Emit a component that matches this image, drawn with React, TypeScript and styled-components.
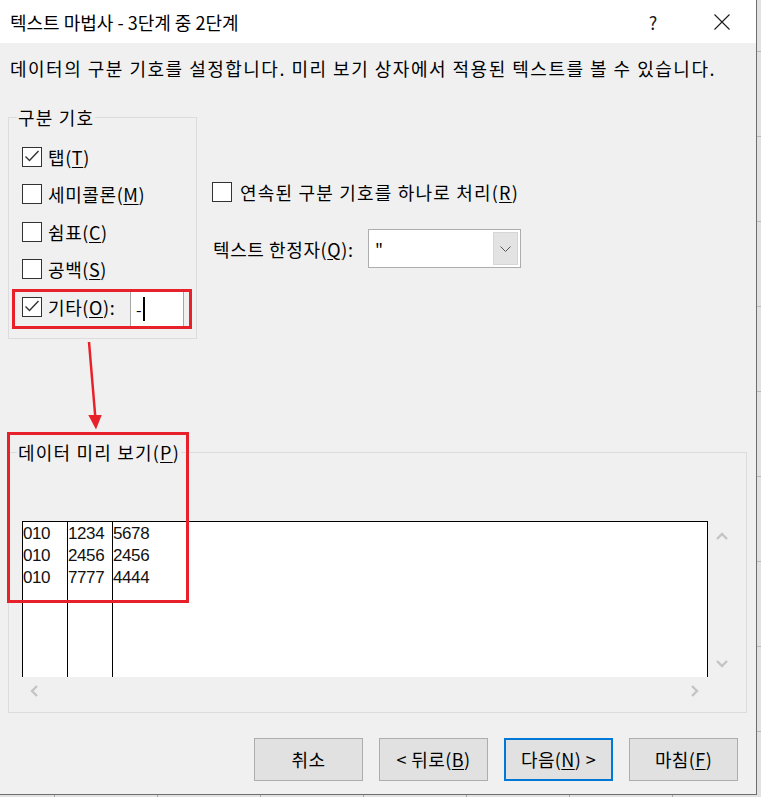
import React from 'react';
import styled, { createGlobalStyle } from 'styled-components';

const GlobalStyle = createGlobalStyle`
  html, body { margin: 0; padding: 0; }
  body {
    width: 761px;
    height: 797px;
    overflow: hidden;
    background-color: #e2e2e2;
    background-image:
      repeating-linear-gradient(90deg, transparent 0 54px, #a9a9a9 54px 55px, transparent 55px 103px),
      repeating-linear-gradient(180deg, transparent 0 51px, #b9b9b9 51px 52px, transparent 52px 85px);
  }
  * { box-sizing: border-box; }
`;

const FONT = `"Noto Sans CJK KR", "Noto Sans", sans-serif`;

const Dialog = styled.div`
  position: relative;
  width: 757px;
  height: 795px;
  background: #f0f0f0;
  border-right: 1px solid #6e6e6e;
  border-bottom: 1px solid #6e6e6e;
  display: flex;
  flex-direction: column;
  font-family: ${FONT};
  font-size: 18px;
  line-height: 24px;
  letter-spacing: 1.2px;
  color: #000;
`;

const TitleBar = styled.div`
  height: 43px;
  background: #fff;
  display: flex;
  align-items: center;
  padding-left: 10px;
  padding-right: 11px;
  flex-shrink: 0;
  letter-spacing: 0;
`;

const Title = styled.div`
  flex: 1;
  white-space: nowrap;
`;

const CaptionButton = styled.div`
  width: 46px;
  height: 43px;
  display: flex;
  align-items: center;
  justify-content: center;
  color: #1a1a1a;
  font-size: 18px;
`;

const CaptionGap = styled.div`
  width: 23px;
`;

const Body = styled.div`
  display: flex;
  flex-direction: column;
  padding: 13px 9px 0 8px;
`;

const Description = styled.p`
  margin: 0;
  padding-left: 2px;
  white-space: nowrap;
  letter-spacing: 1.5px;
`;

const TopSection = styled.div`
  display: flex;
  align-items: flex-start;
  gap: 15px;
  margin-top: 37px;
`;

const GroupBox = styled.div<{ $width: number; $mt?: number }>`
  width: ${(p) => p.$width}px;
  margin-top: ${(p) => p.$mt ?? 0}px;
  border: 1px solid #dcdcdc;
  display: flex;
  flex-direction: column;
`;

const GroupCaption = styled.div`
  align-self: flex-start;
  margin: -13px 0 0 8px;
  padding: 0 1px;
  background: #f0f0f0;
  white-space: nowrap;
`;

const DelimList = styled.div`
  display: flex;
  flex-direction: column;
  padding: 9px 12px 12px 13px;
  letter-spacing: 0.6px;
`;

const CheckRow = styled.label<{ $h?: number; $gap: number }>`
  display: flex;
  align-items: center;
  height: ${(p) => (p.$h ? `${p.$h}px` : 'auto')};
  gap: ${(p) => p.$gap}px;
  white-space: nowrap;
`;

const Box = styled.span`
  width: 20px;
  height: 20px;
  flex-shrink: 0;
  border: 1px solid #333;
  background: #fff;
  display: flex;
  align-items: center;
  justify-content: center;
`;

const U = styled.span`
  text-decoration: underline;
  text-decoration-thickness: 1px;
  text-underline-offset: 2px;
`;

const OtherInput = styled.div`
  margin-left: auto;
  margin-top: 4px;
  width: 54px;
  height: 36px;
  background: #fff;
  border: 1px solid #a5a5a5;
  display: flex;
  align-items: center;
  padding-left: 5px;
  font-size: 16px;
  letter-spacing: 0;
`;

const Caret = styled.span`
  width: 2px;
  height: 24px;
  background: #000;
  margin-left: 1px;
`;

const RightColumn = styled.div`
  display: flex;
  flex-direction: column;
  margin-top: 63px;
`;

const QualifierRow = styled.div`
  display: flex;
  align-items: center;
  margin-top: 25px;
  padding-left: 1px;
`;

const QualifierLabel = styled.span`
  width: 155px;
  white-space: nowrap;
  letter-spacing: 0.6px;
`;

const Select = styled.div`
  width: 153px;
  height: 39px;
  background: #fff;
  border: 1px solid #adadad;
  padding: 2px;
  display: flex;
  align-items: center;
`;

const SelectValue = styled.span`
  flex: 1;
  padding-left: 4px;
  font-size: 17px;
`;

const DropButton = styled.span`
  width: 25px;
  height: 33px;
  background: #e3e3e3;
  border: 1px solid #d6d6d6;
  display: flex;
  align-items: center;
  justify-content: center;
`;

const PreviewInner = styled.div`
  display: grid;
  grid-template-columns: 686px 28px;
  grid-template-rows: 156px 28px;
  padding: 57px 0 7px 13px;
`;

const DataArea = styled.div`
  background: #fff;
  border-top: 1px solid #000;
  border-right: 1px solid #000;
  display: flex;
`;

const DataColumn = styled.div`
  width: 45px;
  border-left: 1px solid #000;
  display: flex;
  flex-direction: column;
  padding-top: 1px;
  font-family: "Liberation Sans", Arial, sans-serif;
  font-size: 17px;
  line-height: 22px;
  letter-spacing: -0.4px;
  color: #111;
`;

const DataCell = styled.span`
  display: block;
  height: 22px;
`;

const VScroll = styled.div`
  display: flex;
  flex-direction: column;
  align-items: center;
  justify-content: space-between;
  padding: 11px 0 9px;
`;

const HScroll = styled.div`
  display: flex;
  align-items: flex-start;
  justify-content: space-between;
  padding: 8px 9px 0 8px;
`;

const ButtonRow = styled.div`
  display: flex;
  justify-content: flex-end;
  gap: 16px;
  margin-top: 25px;
  padding-right: 9px;
  letter-spacing: 0.4px;
`;

const Button = styled.div<{ $primary?: boolean }>`
  width: 109px;
  height: 43px;
  background: #e1e1e1;
  border: ${(p) => (p.$primary ? '2px solid #0078d7' : '1px solid #adadad')};
  display: flex;
  align-items: center;
  justify-content: center;
  white-space: nowrap;
`;

const Highlight = styled.div<{ $x: number; $y: number; $w: number; $h: number }>`
  position: absolute;
  left: ${(p) => p.$x}px;
  top: ${(p) => p.$y}px;
  width: ${(p) => p.$w}px;
  height: ${(p) => p.$h}px;
  border: 3px solid #e8202a;
  pointer-events: none;
`;

const ArrowSvg = styled.svg`
  position: absolute;
  left: 80px;
  top: 335px;
  width: 30px;
  height: 100px;
  pointer-events: none;
`;

const Check = () => (
  <svg width="18" height="18" viewBox="0 0 18 18">
    <polyline points="2.5,8.5 6.5,12.5 15.5,3" fill="none" stroke="#333" strokeWidth="1.4" />
  </svg>
);

const CheckBox = ({ checked }: { checked?: boolean }) => <Box>{checked && <Check />}</Box>;

const Chevron = ({ dir }: { dir: 'up' | 'down' | 'left' | 'right' }) => {
  const pts = {
    up: '1,7 6,2 11,7',
    down: '1,1 6,6 11,1',
    left: '7,1 2,6 7,11',
    right: '1,1 6,6 1,11',
  }[dir];
  const vertical = dir === 'up' || dir === 'down';
  return (
    <svg
      width={vertical ? 12 : 8}
      height={vertical ? 8 : 12}
      viewBox={vertical ? '0 0 12 8' : '0 0 8 12'}
    >
      <polyline points={pts} fill="none" stroke="#c4c4c4" strokeWidth="2.4" />
    </svg>
  );
};

const columns = [
  ['010', '010', '010'],
  ['1234', '2456', '7777'],
  ['5678', '2456', '4444'],
];

export default function App() {
  return (
    <>
      <GlobalStyle />
      <Dialog>
        <TitleBar>
          <Title>텍스트 마법사 - 3단계 중 2단계</Title>
          <CaptionButton>?</CaptionButton>
          <CaptionGap />
          <CaptionButton>
            <svg width="16" height="16" viewBox="0 0 16 16">
              <path d="M0.5 0.5 L15.5 15.5 M15.5 0.5 L0.5 15.5" stroke="#1a1a1a" strokeWidth="1.1" />
            </svg>
          </CaptionButton>
        </TitleBar>
        <Body>
          <Description>
            데이터의 구분 기호를 설정합니다. 미리 보기 상자에서 적용된 텍스트를 볼 수 있습니다.
          </Description>
          <TopSection>
            <GroupBox $width={189}>
              <GroupCaption>구분 기호</GroupCaption>
              <DelimList>
                <CheckRow $h={37.5} $gap={6}>
                  <CheckBox checked />
                  <span>
                    탭(<U>T</U>)
                  </span>
                </CheckRow>
                <CheckRow $h={37.5} $gap={6}>
                  <CheckBox />
                  <span>
                    세미콜론(<U>M</U>)
                  </span>
                </CheckRow>
                <CheckRow $h={37.5} $gap={6}>
                  <CheckBox />
                  <span>
                    쉼표(<U>C</U>)
                  </span>
                </CheckRow>
                <CheckRow $h={37.5} $gap={6}>
                  <CheckBox />
                  <span>
                    공백(<U>S</U>)
                  </span>
                </CheckRow>
                <CheckRow $h={37.5} $gap={6}>
                  <CheckBox checked />
                  <span>
                    기타(<U>O</U>):
                  </span>
                  <OtherInput>
                    <span>-</span>
                    <Caret />
                  </OtherInput>
                </CheckRow>
              </DelimList>
            </GroupBox>
            <RightColumn>
              <CheckRow $h={24} $gap={8}>
                <CheckBox />
                <span>
                  연속된 구분 기호를 하나로 처리(<U>R</U>)
                </span>
              </CheckRow>
              <QualifierRow>
                <QualifierLabel>
                  텍스트 한정자(<U>Q</U>):
                </QualifierLabel>
                <Select>
                  <SelectValue>"</SelectValue>
                  <DropButton>
                    <svg width="11" height="6" viewBox="0 0 11 6">
                      <polyline points="0.5,0.5 5.5,5.5 10.5,0.5" fill="none" stroke="#555" strokeWidth="1" />
                    </svg>
                  </DropButton>
                </Select>
              </QualifierRow>
            </RightColumn>
          </TopSection>
          <GroupBox $width={739} $mt={113}>
            <GroupCaption>
              데이터 미리 보기(<U>P</U>)
            </GroupCaption>
            <PreviewInner>
              <DataArea>
                {columns.map((col, i) => (
                  <DataColumn key={i}>
                    {col.map((v, j) => (
                      <DataCell key={j}>{v}</DataCell>
                    ))}
                  </DataColumn>
                ))}
              </DataArea>
              <VScroll>
                <Chevron dir="up" />
                <Chevron dir="down" />
              </VScroll>
              <HScroll>
                <Chevron dir="left" />
                <Chevron dir="right" />
              </HScroll>
            </PreviewInner>
          </GroupBox>
          <ButtonRow>
            <Button>취소</Button>
            <Button>
              &lt; 뒤로(<U>B</U>)
            </Button>
            <Button $primary>
              다음(<U>N</U>) &gt;
            </Button>
            <Button>
              마침(<U>F</U>)
            </Button>
          </ButtonRow>
        </Body>
        <Highlight $x={12} $y={289} $w={180} $h={40} />
        <Highlight $x={7} $y={432} $w={182} $h={171} />
        <ArrowSvg viewBox="0 0 30 100">
          <line x1="9" y1="7" x2="15.3" y2="82" stroke="#e8202a" strokeWidth="2.5" />
          <polygon points="8.3,80 21.7,80 16,94.5" fill="#e8202a" />
        </ArrowSvg>
      </Dialog>
    </>
  );
}
